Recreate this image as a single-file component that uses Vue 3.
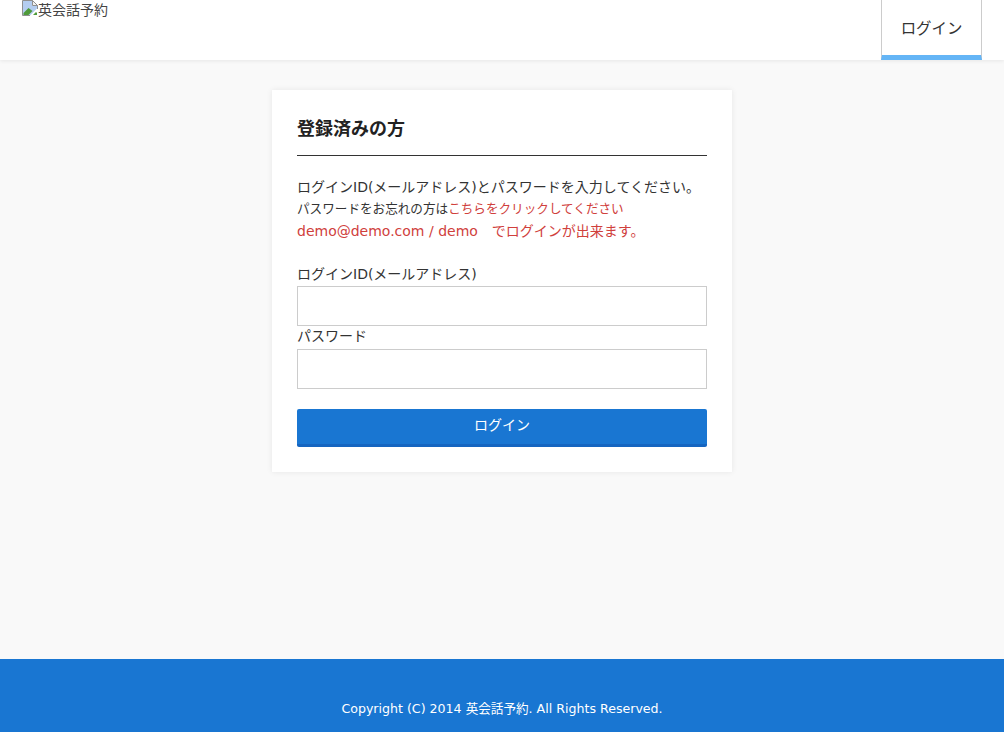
<script setup>
const brand = '英会話予約'
</script>

<template>
  <div class="page">
    <header class="header">
      <div class="logo">
        <svg class="broken" width="16" height="16" viewBox="0 0 16 16">
          <path d="M1 1H10V6H15V8.5L8 15.5H1Z" fill="#b4cdf0" />
          <path d="M.5 15.5V.5H10.5L15.5 5.5V9" fill="none" stroke="#8f8f8f" />
          <path d="M.5 15.5H8" fill="none" stroke="#8f8f8f" />
          <path d="M10.5.5V5.5H15.5Z" fill="#f2f2f2" stroke="#8f8f8f" />
          <path d="M1.5 15V13L6.5 8L10.5 11L6.5 15Z" fill="#4f9a3a" />
          <path d="M11 15L14 12L15 13V15Z" fill="#4f9a3a" />
        </svg><span>{{ brand }}</span>
      </div>
      <a class="nav-login">ログイン</a>
    </header>

    <main class="main">
      <section class="card">
        <h2 class="title">登録済みの方</h2>
        <p class="lead">ログインID(メールアドレス)とパスワードを入力してください。</p>
        <p class="note">パスワードをお忘れの方は<span class="red">こちらをクリックしてください</span></p>
        <p class="demo red">demo@demo.com / demo　でログインが出来ます。</p>
        <form class="form" @submit.prevent>
          <label class="label">ログインID(メールアドレス)</label>
          <input class="input" type="text" />
          <label class="label second">パスワード</label>
          <input class="input" type="password" />
          <button class="submit" type="submit">ログイン</button>
        </form>
      </section>
    </main>

    <footer class="footer">Copyright (C) 2014 {{ brand }}. All Rights Reserved.</footer>
  </div>
</template>

<style>
html, body { margin: 0; padding: 0; }
</style>

<style scoped>
* { box-sizing: border-box; }
.page {
  width: 1004px;
  height: 732px;
  display: flex;
  flex-direction: column;
  background: #f9f9f9;
  color: #333;
  font-family: "DejaVu Sans", "Noto Sans CJK JP", sans-serif;
  font-size: 14px;
  overflow: hidden;
}
.header {
  height: 60px;
  flex: none;
  display: flex;
  justify-content: space-between;
  padding: 0 22px;
  background: #fff;
  box-shadow: 0 1px 4px rgba(0, 0, 0, .08);
}
.logo {
  display: flex;
  align-items: flex-start;
  line-height: 20px;
  font-size: 14px;
  color: #444;
}
.broken { flex: none; }
.nav-login {
  width: 101px;
  height: 60px;
  display: flex;
  align-items: center;
  justify-content: center;
  padding-bottom: 2px;
  border-left: 1px solid #ccc;
  border-right: 1px solid #ccc;
  border-bottom: 5px solid #64b5f6;
  font-size: 15.4px;
  color: #333;
}
.main {
  flex: 1;
  display: flex;
  justify-content: center;
  align-items: flex-start;
  padding-top: 30px;
}
.card {
  width: 460px;
  padding: 25px;
  background: #fff;
  box-shadow: 0 0 6px rgba(0, 0, 0, .08);
}
.title {
  margin: 0 0 20px;
  height: 41px;
  border-bottom: 1px solid #333;
  font-size: 18px;
  font-weight: 700;
  line-height: 27px;
  color: #222;
}
.lead { margin: 0; font-size: 14px; line-height: 22px; }
.note { margin: 0; font-size: 12.6px; line-height: 21px; }
.demo { margin: 0; font-size: 14px; line-height: 24px; }
.red { color: #d0403c; }
.form { display: flex; flex-direction: column; margin-top: 20px; }
.label { font-size: 14px; line-height: 23px; height: 23px; }
.second { line-height: 21px; }
.input {
  display: block;
  width: 100%;
  height: 40px;
  border: 1px solid #ccc;
  background: #fff;
  outline: none;
}
.submit {
  height: 38px;
  margin-top: 20px;
  padding: 0 0 6px;
  border: 0;
  border-bottom: 3px solid #1565c0;
  border-radius: 2px;
  background: #1976d2;
  color: #fff;
  font-family: inherit;
  font-size: 14px;
}
.footer {
  height: 73px;
  flex: none;
  padding-top: 39px;
  background: #1976d2;
  color: #fff;
  font-size: 12.6px;
  line-height: 22px;
  text-align: center;
}
</style>
